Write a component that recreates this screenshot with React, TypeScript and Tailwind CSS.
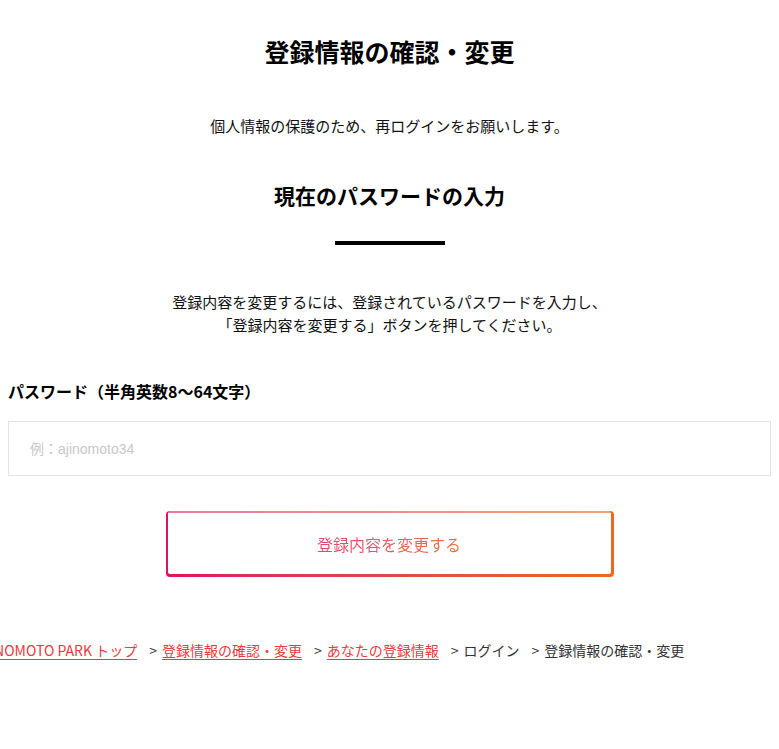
export default function App() {
  const crumbs = [
    { label: "AJINOMOTO PARK トップ", link: true },
    { label: "登録情報の確認・変更", link: true },
    { label: "あなたの登録情報", link: true },
    { label: "ログイン", link: false },
    { label: "登録情報の確認・変更", link: false },
  ];

  return (
    <div
      className="min-h-[749px] w-full overflow-hidden bg-white px-[8px] pt-[33px] pb-[60px] text-[#111]"
      style={{ fontFamily: '"Noto Sans CJK JP", "Noto Sans", sans-serif' }}
    >
      <h1 className="text-center text-[25px] font-bold leading-[36px] text-black">
        登録情報の確認・変更
      </h1>

      <p className="mt-[45px] text-center text-[15px] leading-[23px]">
        個人情報の保護のため、再ログインをお願いします。
      </p>

      <h2 className="mt-[43px] text-center text-[21px] font-bold leading-[30px] text-black">
        現在のパスワードの入力
      </h2>
      <div className="mx-auto mt-[31px] h-[4px] w-[110px] bg-black" />

      <p className="mt-[45px] text-center text-[15px] leading-[23px]">
        登録内容を変更するには、登録されているパスワードを入力し、
        <br />
        「登録内容を変更する」ボタンを押してください。
      </p>

      <label className="mt-[43px] block text-[16px] font-bold leading-[24px] text-black">
        パスワード（半角英数8〜64文字）
      </label>
      <input
        type="password"
        placeholder="例：ajinomoto34"
        className="mt-[18px] block h-[55px] w-full border border-[#e3e3e3] px-[21px] text-[14px] outline-none placeholder:text-[#c8c8c8]"
        style={{ fontFamily: '"Liberation Sans", "Noto Sans CJK JP", sans-serif' }}
      />

      <div className="mx-auto mt-[35px] flex h-[66px] w-[448px] rounded-[4px] bg-linear-to-r from-[#d8155d] to-[#f0661a] pl-[2px] pr-[3px] pb-[3px]">
        <div className="flex flex-1 flex-col overflow-hidden rounded-[2px]">
          <div className="h-[2px] bg-linear-to-r from-[#ea7a9b] to-[#f3a170]" />
          <button className="flex flex-1 items-center justify-center bg-white">
            <span className="bg-linear-to-r from-[#e4436f] to-[#ee7042] bg-clip-text text-[16px] leading-[24px] text-transparent">
              登録内容を変更する
            </span>
          </button>
        </div>
      </div>

      <nav className="-ml-[34px] mt-[63px] flex whitespace-nowrap text-[14px] leading-[20px] text-[#333]">
        {crumbs.map((c, i) => (
          <span key={i} className={i === 0 ? "" : "ml-[12px]"}>
            {i > 0 && <span className="mr-[5px]">&gt;</span>}
            {c.link ? (
              <a href="#" className="text-[#e83a40] underline underline-offset-[3px]">
                {c.label}
              </a>
            ) : (
              <span>{c.label}</span>
            )}
          </span>
        ))}
      </nav>
    </div>
  );
}
